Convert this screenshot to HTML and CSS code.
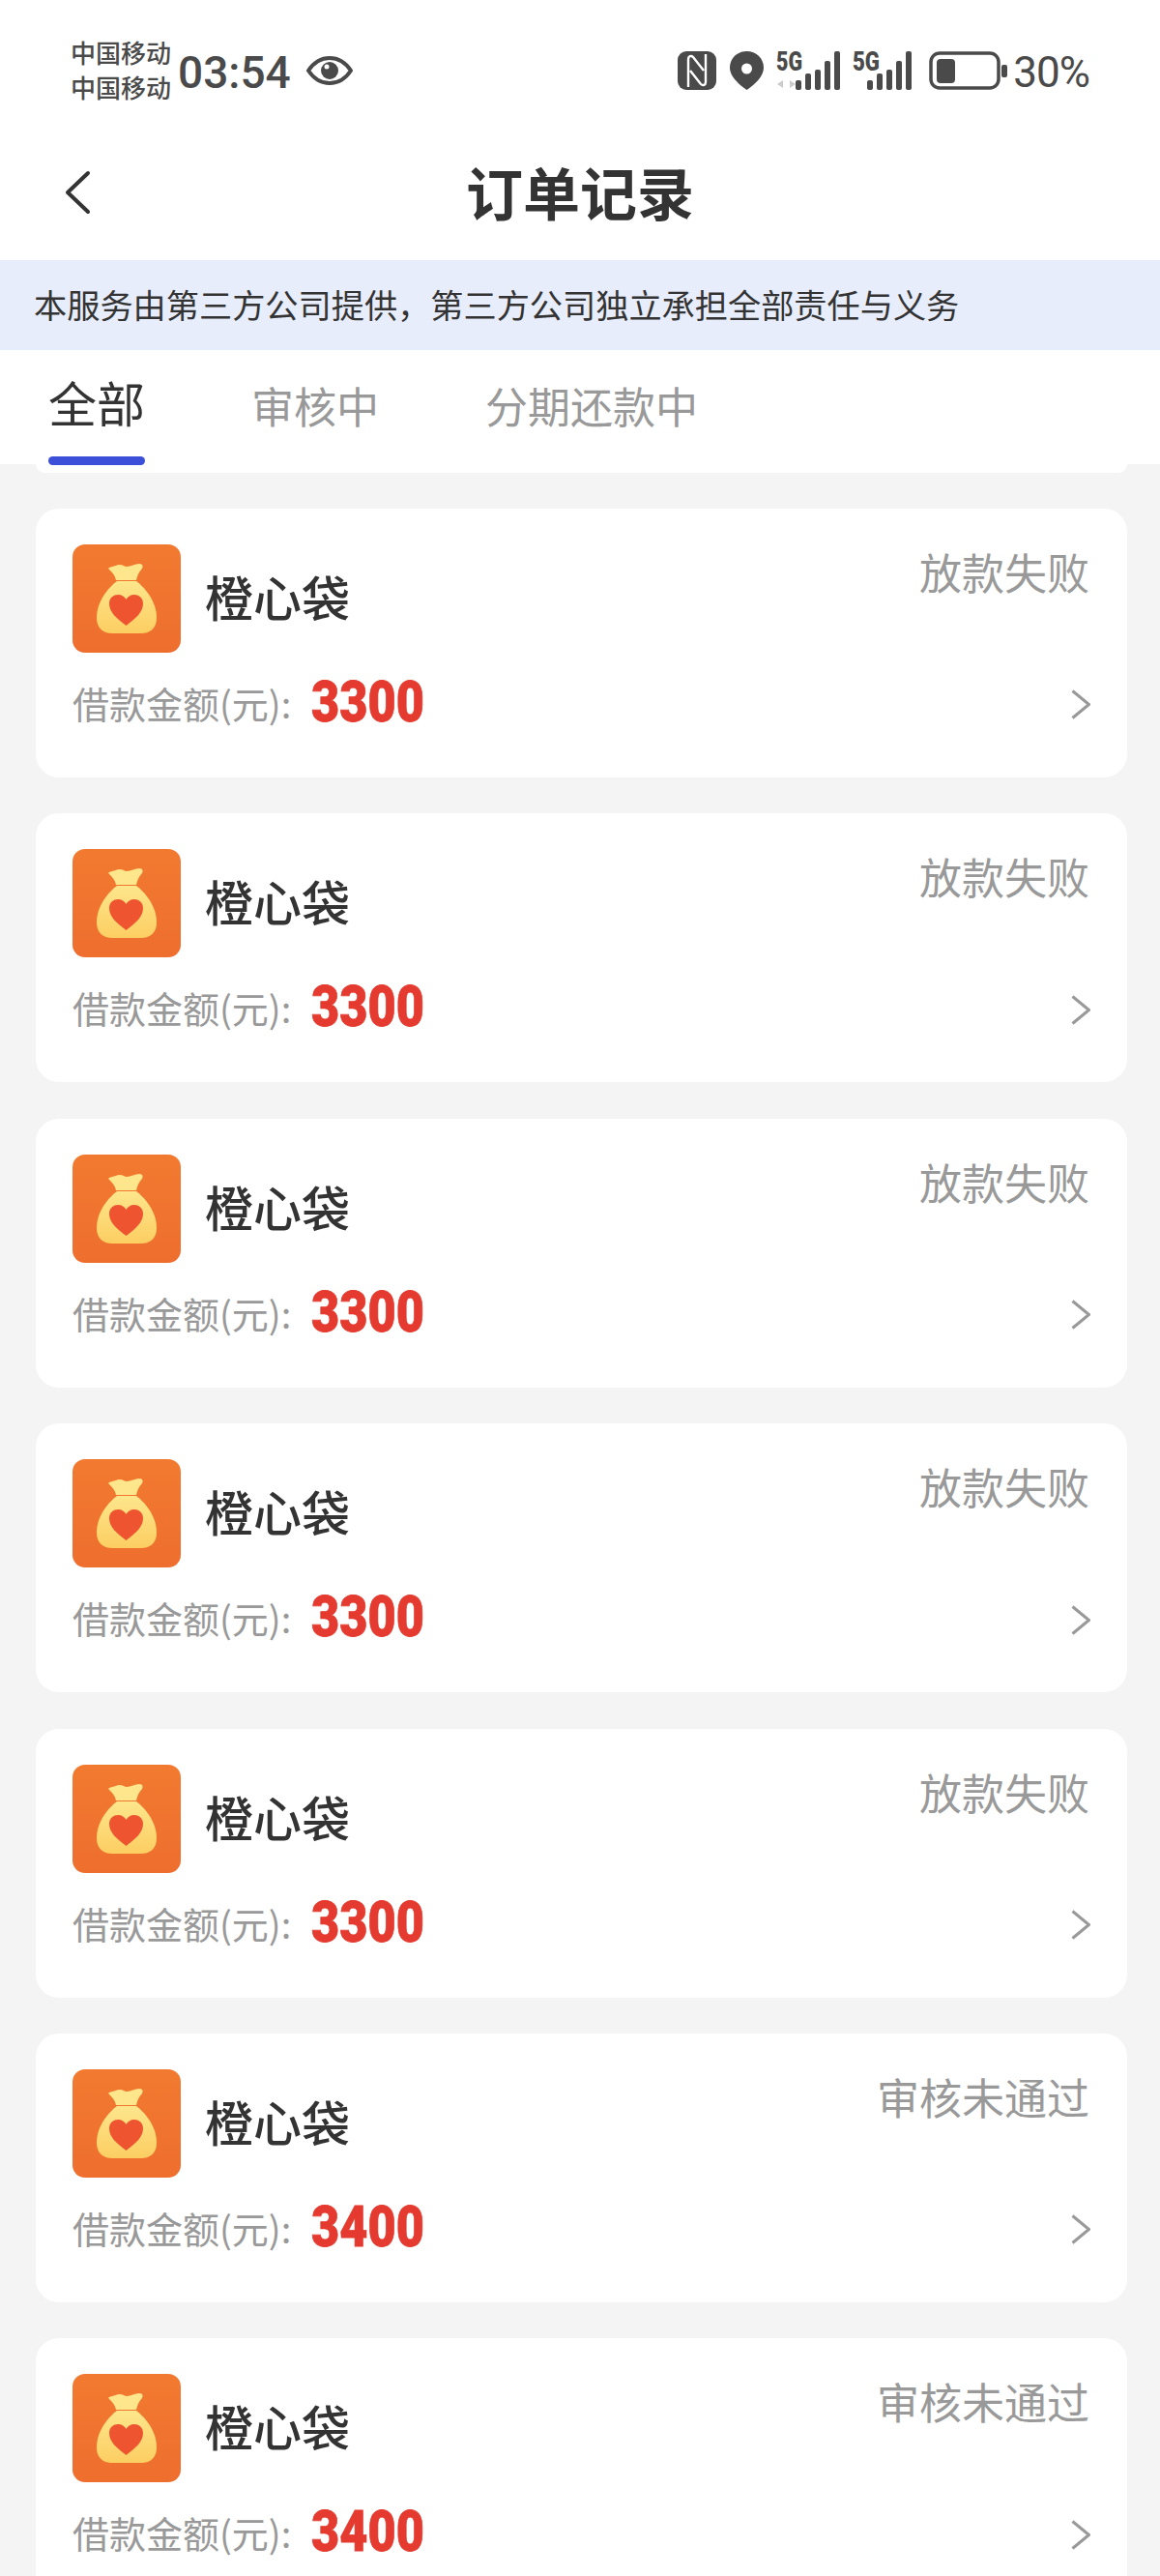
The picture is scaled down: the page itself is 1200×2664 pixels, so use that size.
FILE: index.html
```html
<!DOCTYPE html>
<html lang="zh-CN">
<head>
    <meta charset="UTF-8">
    <meta name="viewport" content="width=device-width, initial-scale=1.0">
    <title>订单记录</title>
    <link rel="stylesheet" href="styles.css">
</head>
<body>
    <svg class="defs" width="0" height="0">
        <symbol id="app-icon" viewBox="0 0 112 112">
            <defs>
                <linearGradient id="app-bg" x1="0" y1="0" x2="0" y2="1">
                    <stop offset="0" stop-color="#f27a30"/>
                    <stop offset="1" stop-color="#ee6e2e"/>
                </linearGradient>
                <linearGradient id="bag-fill" x1="0" y1="0" x2="0" y2="1">
                    <stop offset="0" stop-color="#fde68c"/>
                    <stop offset="1" stop-color="#fcce62"/>
                </linearGradient>
            </defs>
            <rect width="112" height="112" rx="13" fill="url(#app-bg)"/>
            <path d="M38 24c4-1 8-3 11-3 3 0 5 2 7 2 4 0 9-3 13-3 4 0 4 3 3 5-3 3-5 7-6 12H45c-1-5-4-8-7-11-1-1-1-2 0-2z" fill="#fde68c"/>
            <path d="M46 38h20c8 6 21 20 21 38 0 12-8 16-16 16H41c-8 0-16-4-16-16 0-18 13-32 21-38z" fill="url(#bag-fill)"/>
            <path d="M55.5 84C45 76 38 70 38 61c0-6 5-9 9-9 4 0 7 2 8.500 5 1.500-3 4.500-5 8.500-5 4 0 9 3 9 9 0 9-7 15-17.500 23z" fill="#ee5430"/>
        </symbol>
        <symbol id="chevron-right" viewBox="0 0 20 31">
            <path d="M1.500 1.500l17 14-17 14" fill="none" stroke="#999" stroke-width="3"/>
        </symbol>
    </svg>

    <div class="status-bar">
        <div class="status-left">
            <div class="carriers"><span>中国移动</span><span>中国移动</span></div>
            <span class="time">03:54</span>
            <svg class="eye" width="48" height="32" viewBox="0 0 48 32">
                <path d="M2 16C8 7 15 3 24 3s16 4 22 13c-6 9-13 13-22 13S8 25 2 16z" fill="none" stroke="#4a4a4a" stroke-width="4"/>
                <circle cx="24" cy="16" r="9" fill="#4a4a4a"/>
                <circle cx="21" cy="12" r="2.500" fill="#fff"/>
            </svg>
        </div>
        <div class="status-right">
            <svg width="40" height="40" viewBox="0 0 40 40">
                <rect width="40" height="40" rx="9" fill="#4a4a4a"/>
                <path d="M11 37V8c0-3 3-4 5-2l11 14M29 3v29c0 3-3 4-5 2L13 20" fill="none" stroke="#fff" stroke-width="2.400"/>
            </svg>
            <svg class="pin" width="35" height="40" viewBox="0 0 35 40">
                <path d="M17.500 0C27 0 35 7 35 17c0 9-9 17-17.500 23C9 34 0 26 0 17 0 7 8 0 17.500 0z" fill="#4a4a4a"/>
                <circle cx="17.500" cy="18" r="5.500" fill="#fff"/>
            </svg>
            <svg class="signal" width="66" height="40" viewBox="0 0 66 40">
                <text x="0" y="20" class="net-label" textLength="27" lengthAdjust="spacingAndGlyphs">5G</text>
                <path d="M7 30l-6 4 6 4zM10 28v11M14 30l6 4-6 4z" fill="#ccc"/>
                <rect x="20" y="30" width="6" height="10" rx="2" fill="#4a4a4a"/>
                <rect x="30" y="23" width="6" height="17" rx="2" fill="#4a4a4a"/>
                <rect x="40" y="19" width="6" height="21" rx="2" fill="#4a4a4a"/>
                <rect x="50" y="10" width="6" height="30" rx="2" fill="#4a4a4a"/>
                <rect x="60" y="0" width="6" height="40" rx="2" fill="#4a4a4a"/>
            </svg>
            <svg class="signal" width="61" height="40" viewBox="0 0 61 40">
                <text x="0" y="20" class="net-label" textLength="28" lengthAdjust="spacingAndGlyphs">5G</text>
                <rect x="15" y="30" width="6" height="10" rx="2" fill="#4a4a4a"/>
                <rect x="25" y="23" width="6" height="17" rx="2" fill="#4a4a4a"/>
                <rect x="35" y="19" width="6" height="21" rx="2" fill="#4a4a4a"/>
                <rect x="45" y="10" width="6" height="30" rx="2" fill="#4a4a4a"/>
                <rect x="55" y="0" width="6" height="40" rx="2" fill="#4a4a4a"/>
            </svg>
            <svg class="battery" width="81" height="40" viewBox="0 0 81 40">
                <rect x="2" y="2" width="70" height="36" rx="9" fill="none" stroke="#4a4a4a" stroke-width="3.500"/>
                <rect x="8" y="8" width="19" height="25" rx="4" fill="#4a4a4a"/>
                <rect x="75" y="14" width="6" height="13" rx="2" fill="#4a4a4a"/>
            </svg>
            <span class="battery-text">30%</span>
        </div>
    </div>

    <div class="nav-bar">
        <svg class="back" width="28" height="46" viewBox="0 0 28 46">
            <path d="M25 3L4 23l21 20" fill="none" stroke="#333" stroke-width="4" stroke-linecap="round" stroke-linejoin="round"/>
        </svg>
        <h1 class="nav-title">订单记录</h1>
    </div>

    <div class="notice">本服务由第三方公司提供，第三方公司独立承担全部责任与义务</div>

    <div class="tabs">
        <div class="tab active">全部</div>
        <div class="tab">审核中</div>
        <div class="tab">分期还款中</div>
    </div>

    <div class="order-list">
        <div class="card-end"></div>

        <div class="order-card">
            <div class="card-top">
                <svg class="app-logo"><use href="#app-icon"/></svg>
                <span class="app-name">橙心袋</span>
                <span class="status">放款失败</span>
            </div>
            <div class="card-bottom">
                <span class="amount-label">借款金额(元):</span>
                <span class="amount">3300</span>
                <svg class="arrow"><use href="#chevron-right"/></svg>
            </div>
        </div>

        <div class="order-card">
            <div class="card-top">
                <svg class="app-logo"><use href="#app-icon"/></svg>
                <span class="app-name">橙心袋</span>
                <span class="status">放款失败</span>
            </div>
            <div class="card-bottom">
                <span class="amount-label">借款金额(元):</span>
                <span class="amount">3300</span>
                <svg class="arrow"><use href="#chevron-right"/></svg>
            </div>
        </div>

        <div class="order-card">
            <div class="card-top">
                <svg class="app-logo"><use href="#app-icon"/></svg>
                <span class="app-name">橙心袋</span>
                <span class="status">放款失败</span>
            </div>
            <div class="card-bottom">
                <span class="amount-label">借款金额(元):</span>
                <span class="amount">3300</span>
                <svg class="arrow"><use href="#chevron-right"/></svg>
            </div>
        </div>

        <div class="order-card">
            <div class="card-top">
                <svg class="app-logo"><use href="#app-icon"/></svg>
                <span class="app-name">橙心袋</span>
                <span class="status">放款失败</span>
            </div>
            <div class="card-bottom">
                <span class="amount-label">借款金额(元):</span>
                <span class="amount">3300</span>
                <svg class="arrow"><use href="#chevron-right"/></svg>
            </div>
        </div>

        <div class="order-card">
            <div class="card-top">
                <svg class="app-logo"><use href="#app-icon"/></svg>
                <span class="app-name">橙心袋</span>
                <span class="status">放款失败</span>
            </div>
            <div class="card-bottom">
                <span class="amount-label">借款金额(元):</span>
                <span class="amount">3300</span>
                <svg class="arrow"><use href="#chevron-right"/></svg>
            </div>
        </div>

        <div class="order-card">
            <div class="card-top">
                <svg class="app-logo"><use href="#app-icon"/></svg>
                <span class="app-name">橙心袋</span>
                <span class="status">审核未通过</span>
            </div>
            <div class="card-bottom">
                <span class="amount-label">借款金额(元):</span>
                <span class="amount">3400</span>
                <svg class="arrow"><use href="#chevron-right"/></svg>
            </div>
        </div>

        <div class="order-card">
            <div class="card-top">
                <svg class="app-logo"><use href="#app-icon"/></svg>
                <span class="app-name">橙心袋</span>
                <span class="status">审核未通过</span>
            </div>
            <div class="card-bottom">
                <span class="amount-label">借款金额(元):</span>
                <span class="amount">3400</span>
                <svg class="arrow"><use href="#chevron-right"/></svg>
            </div>
        </div>
    </div>
</body>
</html>
```
FILE: styles.css
```css
html, body {
    height: 2664px;
    overflow: hidden;
}

body {
    margin: 0;
    padding: 0;
    font-family: "Noto Sans CJK SC", "Noto Sans", sans-serif;
    background-color: #f4f4f4;
    color: #333;
}

.defs {
    display: block;
    height: 0;
}

/* status bar */
.status-bar {
    display: flex;
    align-items: center;
    justify-content: space-between;
    height: 146px;
    padding: 0 73px;
    box-sizing: border-box;
    background-color: #fff;
    color: #4a4a4a;
}

.status-left,
.status-right {
    display: flex;
    align-items: center;
}

.carriers {
    display: flex;
    flex-direction: column;
    margin-top: -2px;
    font-size: 26px;
    font-weight: 500;
    line-height: 36px;
}

.time {
    margin-left: 7px;
    margin-top: 3px;
    font-family: Roboto, sans-serif;
    font-size: 46px;
    font-weight: 500;
    line-height: 50px;
}

.eye {
    margin-left: 16px;
}

.status-right svg {
    display: block;
}

.pin {
    margin-left: 14px;
}

.signal {
    margin-left: 13px;
    overflow: visible;
}

.battery {
    margin-left: 18px;
}

.net-label {
    font-family: Roboto, sans-serif;
    font-size: 28px;
    font-weight: 900;
    fill: #4a4a4a;
}

.battery-text {
    margin-left: 6px;
    margin-top: 3px;
    font-family: Roboto, sans-serif;
    font-size: 44px;
    letter-spacing: -1px;
    line-height: 50px;
}

/* nav bar */
.nav-bar {
    display: flex;
    align-items: center;
    justify-content: center;
    position: relative;
    height: 123px;
    background-color: #fff;
}

.back {
    position: absolute;
    left: 66px;
    top: 30px;
}

.nav-title {
    margin: 0 0 20px;
    font-size: 59px;
    font-weight: 700;
    line-height: 80px;
}

.notice {
    height: 93px;
    padding-left: 35px;
    font-size: 34.2px;
    line-height: 90px;
    background-color: #e8edfb;
}

/* tabs */
.tabs {
    display: flex;
    align-items: flex-start;
    gap: 110px;
    height: 118px;
    padding-left: 50px;
    background-color: #fff;
}

.tab {
    margin-top: 27px;
    font-size: 44px;
    line-height: 60px;
    color: #999;
}

.tab.active {
    position: relative;
    margin-top: 23px;
    font-size: 50px;
    line-height: 60px;
    color: #333;
}

.tab.active::after {
    content: "";
    position: absolute;
    left: 0;
    top: 87px;
    width: 100px;
    height: 9px;
    border-radius: 5px;
    background-color: #3b4fd8;
}

/* order list */
.order-list {
    display: flex;
    flex-direction: column;
    gap: 37.4px;
    padding: 0 34px 0 37px;
}

.card-end {
    height: 8.6px;
    border-radius: 0 0 24px 24px;
    background-color: #fff;
}

.order-card {
    display: flex;
    flex-direction: column;
    height: 278px;
    padding: 37px 37px 0 38px;
    box-sizing: border-box;
    border-radius: 24px;
    background-color: #fff;
}

.card-top {
    display: flex;
    align-items: center;
    height: 112px;
}

.app-logo {
    width: 112px;
    height: 112px;
    flex-shrink: 0;
}

.app-name {
    margin-left: 25px;
    margin-bottom: 6px;
    font-size: 50px;
    font-weight: 500;
    line-height: 60px;
}

.status {
    align-self: flex-start;
    margin-left: auto;
    margin-top: -2px;
    margin-right: 2px;
    font-size: 44px;
    line-height: 60px;
    color: #999;
}

.card-bottom {
    display: flex;
    align-items: center;
    height: 60px;
    margin-top: 21px;
}

.amount-label {
    margin-top: 2px;
    font-size: 38px;
    line-height: 60px;
    color: #999;
}

.amount {
    display: inline-block;
    margin-left: 21px;
    font-family: Roboto, sans-serif;
    font-size: 60px;
    font-weight: 900;
    line-height: 60px;
    color: #e53a2f;
    -webkit-text-stroke: 0.8px #e53a2f;
    transform: scaleX(0.84);
    transform-origin: left center;
}

.arrow {
    width: 20px;
    height: 31px;
    margin-left: auto;
    margin-right: 1px;
    margin-top: 6px;
}
```
